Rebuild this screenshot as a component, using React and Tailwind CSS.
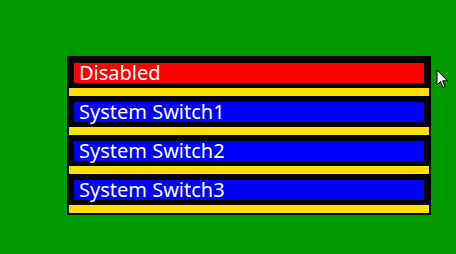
import React from 'react';

const items = [
  { label: 'Disabled', color: 'bg-[#ff0000]' },
  { label: 'System Switch1', color: 'bg-[#0000ff]' },
  { label: 'System Switch2', color: 'bg-[#0000ff]' },
  { label: 'System Switch3', color: 'bg-[#0000ff]' },
];

const Cursor = () => (
  <svg width="13" height="21" viewBox="0 0 13 21" className="absolute left-[436px] top-[69px]">
    <path d="M1 1 L1 16 L4.5 12.5 L7 18.5 L9 17.6 L6.6 11.8 L11.5 11.8 Z" fill="#fff" stroke="#000" strokeWidth="1" strokeLinejoin="miter" />
  </svg>
);

const App = () => {
  return (
    <div className="relative w-[456px] h-[254px] bg-[#009900] overflow-hidden pt-[56px] pl-[67px]" style={{ fontFamily: '"Noto Sans", "Open Sans", sans-serif' }}>
      <div className="w-[364px] bg-black border-2 border-black flex flex-col">
        {items.map((item, idx) => (
          <div key={item.label} className={idx === 0 ? 'pt-[5px]' : 'pt-[6px]'}>
            <div className="px-[5px] pb-[5px]">
              <div className={`${item.color} h-[20px] pl-[5px] text-white text-[20px] leading-[19px] whitespace-nowrap`}>
                {item.label}
              </div>
            </div>
            <div className="h-[8px] bg-[#ffe000]" />
          </div>
        ))}
      </div>
      <Cursor />
    </div>
  );
};

export default App;
